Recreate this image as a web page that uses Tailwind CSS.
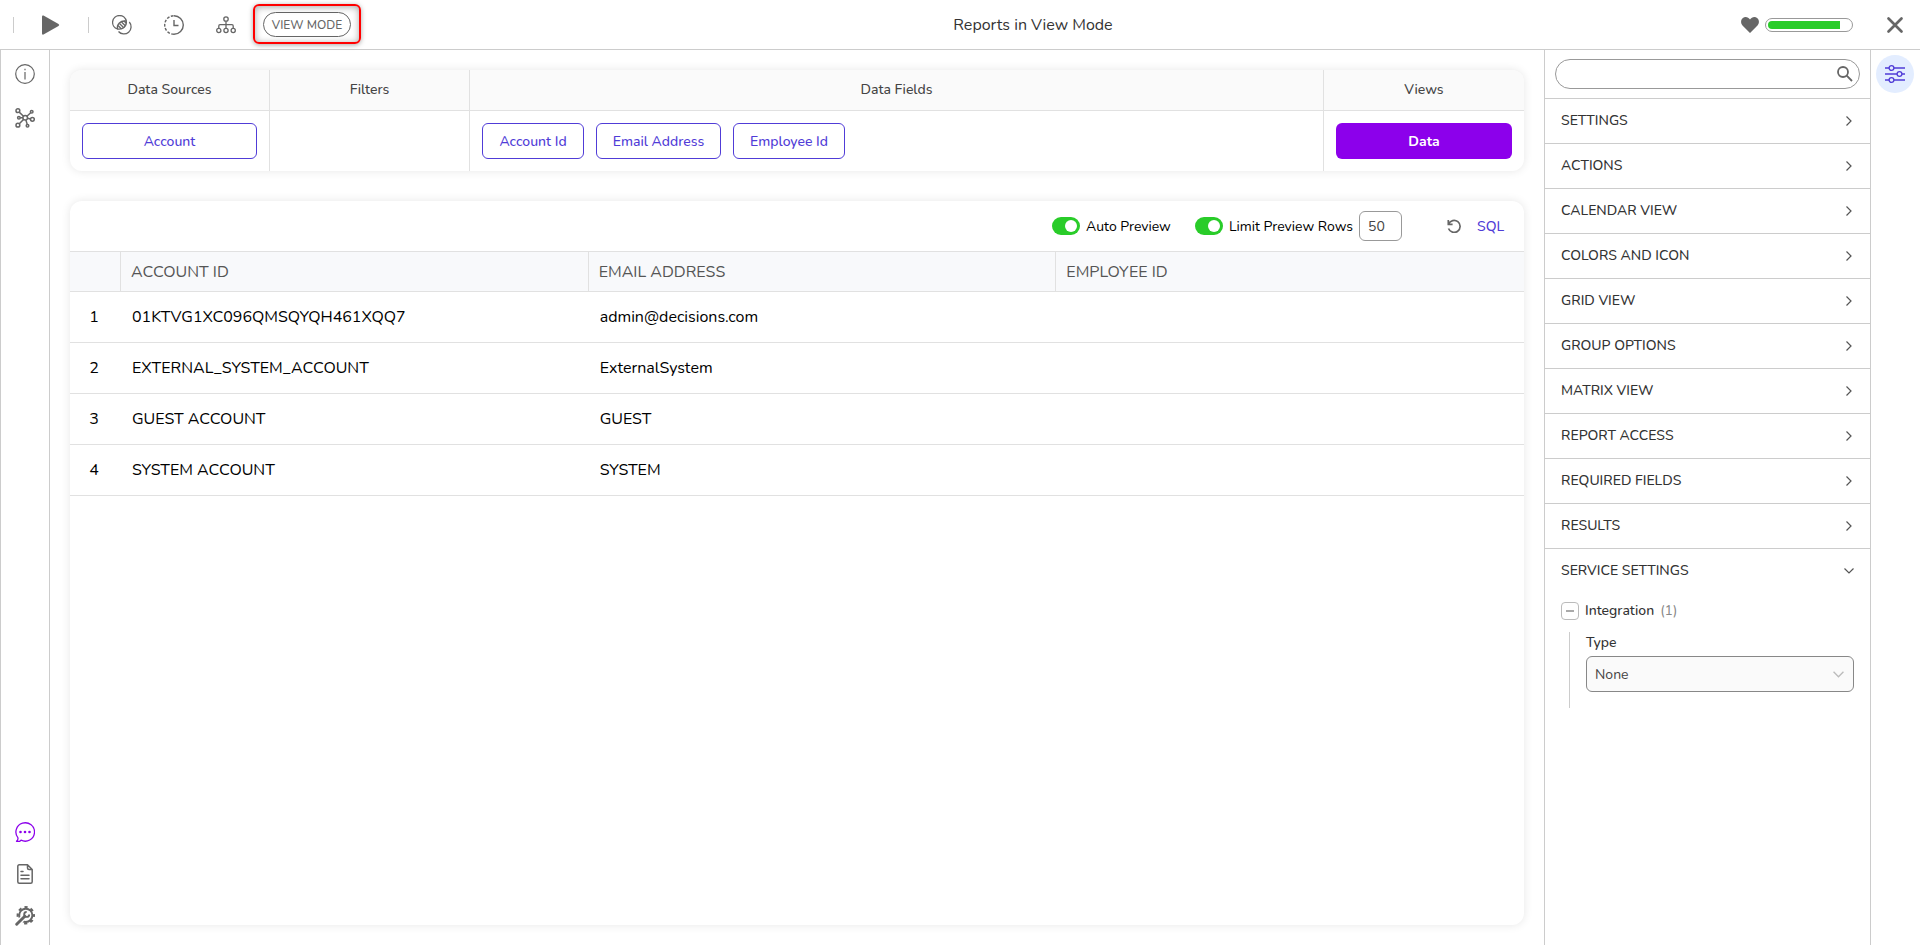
<!DOCTYPE html>
<html lang="en">
<head>
    <meta charset="UTF-8">
    <meta name="viewport" content="width=device-width, initial-scale=1.0">
    <title>Reports in View Mode</title>
    <script src="https://cdn.jsdelivr.net/npm/@tailwindcss/browser@4"></script>
</head>
<body class="h-screen flex flex-col overflow-hidden bg-white text-sm text-[#333] font-['Nunito','Open_Sans',sans-serif]">
    <!-- Top bar -->
    <header class="h-[50px] shrink-0 flex items-center border-b border-[#ccc] text-[#666]">
        <div class="flex items-center pl-[13px]">
            <span class="w-px h-4 bg-[#ccc]"></span>
            <button class="ml-7 w-[18px] h-5" aria-label="Run">
                <svg class="w-[18px] h-5" viewBox="0 0 18 20" fill="currentColor"><path d="M0 1.500Q0 0 1.500.500L16.500 9Q18 10 16.500 11L1.500 19.500Q0 20 0 18.500Z"/></svg>
            </button>
            <span class="ml-7 w-px h-4 bg-[#ccc]"></span>
            <button class="ml-[23px] size-5" aria-label="Compare">
                <svg class="size-5" viewBox="0 0 20 20" fill="none" stroke="currentColor" stroke-width="1.300">
                    <path d="M5.500 14A6.900 6.900 0 1 1 14.300 6.200"/>
                    <path d="M17.300 7A7 7 0 1 1 6.500 16.500"/>
                    <path d="M5.500 14C4.500 9.500 8.500 5 14.300 6.200C15 11 11 15 5.500 14Z"/>
                    <path d="M6 10.500L9.500 14M7.500 8.500L12 13M9.500 7L13.300 10.700M12 6L14.300 8.300"/>
                </svg>
            </button>
            <button class="ml-8 size-5" aria-label="History">
                <svg class="size-5" viewBox="0 0 20 20" fill="none" stroke="currentColor" stroke-width="1.400">
                    <path d="M10 .700A9.300 9.300 0 0 1 10 19.300"/>
                    <path d="M10 19.300A9.300 9.300 0 0 1 10 .700" stroke-dasharray="2.800 1.500"/>
                    <path d="M10 5V10.500H14.500"/>
                </svg>
            </button>
            <button class="ml-8 size-5" aria-label="Dependencies">
                <svg class="size-5" viewBox="0 0 20 20" fill="none" stroke="currentColor" stroke-width="1.300">
                    <circle cx="10" cy="4" r="2.200"/><circle cx="2.800" cy="15.500" r="2.100"/><circle cx="10" cy="15.500" r="2.100"/><circle cx="17.200" cy="15.500" r="2.100"/>
                    <path d="M10 6.200V13.400M2.800 13.400V11Q2.800 9.700 4 9.700H16Q17.200 9.700 17.200 11V13.400"/>
                </svg>
            </button>
            <div class="relative ml-[27px]">
                <span class="flex items-center justify-center w-[88px] h-[25px] border border-[#666] rounded-full text-xs font-medium">VIEW MODE</span>
                <span class="absolute -inset-x-[10px] -top-2 -bottom-[7px] border-2 border-[#f00] rounded-md shadow-[0_1px_5px_rgba(0,0,0,0.35),inset_0_1px_7px_rgba(0,0,0,0.35)]"></span>
            </div>
        </div>
        <h1 class="flex-1 text-center text-base text-[#333]">Reports in View Mode</h1>
        <div class="flex items-center pl-[26px] pr-4">
            <svg class="w-[18px] h-4" viewBox="0 0 18 16" fill="currentColor"><path d="M9 16L1.500 8.500C-.500 6.300-.300 3 1.600 1.300C3.800-.700 7.200-.300 9 2.600C10.800-.300 14.200-.700 16.400 1.300C18.300 3 18.500 6.300 16.500 8.500Z"/></svg>
            <div class="ml-[6px] w-[88px] h-[14px] border border-[#999] rounded-full p-[2px]">
                <div class="h-full bg-[#29cc29] rounded-l-full" style="width: 88%"></div>
            </div>
            <button class="ml-[33px] size-[18px]" aria-label="Close">
                <svg class="size-[18px]" viewBox="0 0 18 18" fill="none" stroke="currentColor" stroke-width="2.700" stroke-linecap="round"><path d="M2.500 2.500L15.500 15.500M15.500 2.500L2.500 15.500"/></svg>
            </button>
        </div>
    </header>

    <div class="flex-1 min-h-0 flex">
        <!-- Left rail -->
        <nav class="w-[50px] shrink-0 border-x border-[#ccc] flex flex-col items-center pt-[14px] pb-[19px] text-[#666]">
            <button class="size-5" aria-label="Info">
                <svg class="size-5" viewBox="0 0 20 20" fill="none" stroke="currentColor" stroke-width="1.200"><circle cx="10" cy="10" r="9.300"/><path d="M10 8V15.500M10 4.700V6.200"/></svg>
            </button>
            <button class="mt-6 size-5" aria-label="Relations">
                <svg class="size-5" viewBox="0 0 20 20" fill="none" stroke="currentColor" stroke-width="1.500">
                    <circle cx="2.900" cy="2.700" r="1.900"/><circle cx="16.700" cy="3.700" r="1.300"/><circle cx="3.900" cy="9.800" r="1.300"/><circle cx="17.400" cy="11.300" r="1.900"/><circle cx="2.900" cy="17.200" r="1.900"/><circle cx="12.500" cy="17.700" r="1.300"/><circle cx="10.200" cy="9.800" r="2.300"/>
                    <path d="M4.200 4.100L8.500 8.200M15.700 4.700L11.900 8.200M5.200 9.800H7.900M12.500 10.200L15.500 10.900M8.500 11.400L4.300 15.800M10.900 12L12.200 16.400"/>
                </svg>
            </button>
            <button class="mt-auto size-5 text-[#8c00eb]" aria-label="Chat">
                <svg class="size-5" viewBox="0 0 20 20" fill="none" stroke="currentColor" stroke-width="1.300" stroke-linejoin="round">
                    <path d="M3 15.800A9.300 9.200 0 1 1 6 18.200L4.800 19.300H1.500Q3.200 17.800 3 15.800"/>
                    <g fill="currentColor" stroke="none"><circle cx="5.500" cy="10" r="1.300"/><circle cx="10" cy="10" r="1.300"/><circle cx="14.500" cy="10" r="1.300"/></g>
                </svg>
            </button>
            <button class="mt-[22px] size-5" aria-label="Document">
                <svg class="size-5" viewBox="0 0 20 20" fill="none" stroke="currentColor" stroke-width="1.500" stroke-linejoin="round" stroke-linecap="round">
                    <path d="M12.500.800H4.300Q2.800.800 2.800 2.300V17.700Q2.800 19.200 4.300 19.200H15.700Q17.200 19.200 17.200 17.700V5.500L12.500.800V4Q12.500 5.500 14 5.500H17.200M6 7.500H8M6 11.300H14M6 14.800H14"/>
                </svg>
            </button>
            <button class="mt-[22px] size-5" aria-label="Settings">
                <svg class="size-5" viewBox="0 0 20 20" fill="none" stroke="currentColor">
                    <circle cx="10.800" cy="9.300" r="6.600" stroke-width="2"/>
                    <circle cx="10.800" cy="9.300" r="8.100" stroke-width="2.200" stroke-dasharray="3.200 3.160" stroke-dashoffset="1.600"/>
                    <path d="M0 20L9 11" stroke="#fff" stroke-width="5.500"/>
                    <path d="M1.700 18.300L9.800 10.200" stroke-width="2.900" stroke-linecap="round"/>
                    <path d="M11.700 5.900A2.500 2.500 0 1 0 14.200 8.400" stroke-width="1.900"/>
                </svg>
            </button>
        </nav>

        <main class="flex-1 min-w-0 flex flex-col gap-[30px] p-5">
            <!-- Report definition -->
            <section class="shrink-0 grid grid-cols-[200px_200px_1fr_200px] rounded-xl overflow-hidden shadow-[0_0_10px_rgba(0,0,0,0.1)] text-[#444]">
                <div class="border-r border-[#e1e1e1]">
                    <h2 class="h-[41px] flex items-center justify-center bg-[#fafafa] border-b border-[#e1e1e1] font-medium">Data Sources</h2>
                    <div class="flex p-3 h-[60px]">
                        <button class="w-full h-9 pt-0.5 border border-[#503cd7] rounded-md text-[#503cd7] font-medium">Account</button>
                    </div>
                </div>
                <div class="border-r border-[#e1e1e1]">
                    <h2 class="h-[41px] flex items-center justify-center bg-[#fafafa] border-b border-[#e1e1e1] font-medium">Filters</h2>
                </div>
                <div class="border-r border-[#e1e1e1]">
                    <h2 class="h-[41px] flex items-center justify-center bg-[#fafafa] border-b border-[#e1e1e1] font-medium">Data Fields</h2>
                    <div class="flex gap-3 p-3 h-[60px]">
                        <button class="w-[102px] h-9 pt-0.5 border border-[#503cd7] rounded-md text-[#503cd7] font-medium">Account Id</button>
                        <button class="w-[125px] h-9 pt-0.5 border border-[#503cd7] rounded-md text-[#503cd7] font-medium">Email Address</button>
                        <button class="w-[112px] h-9 pt-0.5 border border-[#503cd7] rounded-md text-[#503cd7] font-medium">Employee Id</button>
                    </div>
                </div>
                <div>
                    <h2 class="h-[41px] flex items-center justify-center bg-[#fafafa] border-b border-[#e1e1e1] font-medium">Views</h2>
                    <div class="flex p-3 h-[60px]">
                        <button class="w-full h-9 pt-0.5 rounded-md bg-[#8c00eb] text-white font-bold">Data</button>
                    </div>
                </div>
            </section>

            <!-- Preview -->
            <section class="flex-1 min-h-0 rounded-xl overflow-hidden shadow-[0_0_10px_rgba(0,0,0,0.1)]">
                <div class="h-[51px] flex items-center justify-end pr-5 border-b border-[#e1e1e1] text-black">
                    <label class="flex items-center gap-[6px]">
                        <input type="checkbox" checked class="sr-only">
                        <span class="w-7 h-[18px] rounded-full bg-[#29cc29] p-[3px] flex justify-end"><span class="size-3 rounded-full bg-white"></span></span>
                        <span class="w-[84px] pt-0.5 whitespace-nowrap">Auto Preview</span>
                    </label>
                    <label class="ml-[25px] flex items-center gap-[6px]">
                        <input type="checkbox" checked class="sr-only">
                        <span class="w-7 h-[18px] rounded-full bg-[#29cc29] p-[3px] flex justify-end"><span class="size-3 rounded-full bg-white"></span></span>
                        <span class="w-[124px] pt-0.5 whitespace-nowrap">Limit Preview Rows</span>
                    </label>
                    <input type="text" value="50" aria-label="Preview rows" class="ml-[6px] w-[43px] h-[30px] px-2 border border-[#999] rounded-md text-[#444]">
                    <button class="ml-[45px] size-[14px] text-[#666]" aria-label="Refresh">
                        <svg class="size-[14px]" viewBox="0 0 14 14" fill="none" stroke="currentColor" stroke-width="1.700"><path d="M1.300 1V5.300H5.600M1.600 5A6 6 0 1 1 1.500 9.500"/></svg>
                    </button>
                    <a href="#" class="ml-4 w-[27px] pt-0.5 text-[#503cd7] font-medium">SQL</a>
                </div>
                <table class="w-full table-fixed border-separate border-spacing-0 text-base text-black">
                    <thead>
                        <tr class="h-10 bg-[#f8f9fb] text-[#555] text-left">
                            <th class="w-[51px] p-0 border-r border-b border-[#e1e1e1]"></th>
                            <th class="px-[10px] py-0 font-normal border-r border-b border-[#e1e1e1]">ACCOUNT ID</th>
                            <th class="px-[10px] py-0 font-normal border-r border-b border-[#e1e1e1]">EMAIL ADDRESS</th>
                            <th class="px-[10px] py-0 font-normal border-b border-[#e1e1e1]">EMPLOYEE ID</th>
                        </tr>
                    </thead>
                    <tbody>
                        <tr class="h-[51px]">
                            <td class="pr-[3px] text-center border-b border-[#e1e1e1]">1</td>
                            <td class="px-[11px] border-b border-[#e1e1e1]">01KTVG1XC096QMSQYQH461XQQ7</td>
                            <td class="px-[11px] border-b border-[#e1e1e1]">admin@decisions.com</td>
                            <td class="border-b border-[#e1e1e1]"></td>
                        </tr>
                        <tr class="h-[51px]">
                            <td class="pr-[3px] text-center border-b border-[#e1e1e1]">2</td>
                            <td class="px-[11px] border-b border-[#e1e1e1]">EXTERNAL_SYSTEM_ACCOUNT</td>
                            <td class="px-[11px] border-b border-[#e1e1e1]">ExternalSystem</td>
                            <td class="border-b border-[#e1e1e1]"></td>
                        </tr>
                        <tr class="h-[51px]">
                            <td class="pr-[3px] text-center border-b border-[#e1e1e1]">3</td>
                            <td class="px-[11px] border-b border-[#e1e1e1]">GUEST ACCOUNT</td>
                            <td class="px-[11px] border-b border-[#e1e1e1]">GUEST</td>
                            <td class="border-b border-[#e1e1e1]"></td>
                        </tr>
                        <tr class="h-[51px]">
                            <td class="pr-[3px] text-center border-b border-[#e1e1e1]">4</td>
                            <td class="px-[11px] border-b border-[#e1e1e1]">SYSTEM ACCOUNT</td>
                            <td class="px-[11px] border-b border-[#e1e1e1]">SYSTEM</td>
                            <td class="border-b border-[#e1e1e1]"></td>
                        </tr>
                    </tbody>
                </table>
            </section>
        </main>

        <!-- Properties panel -->
        <aside class="w-[327px] shrink-0 border-x border-[#ccc]">
            <div class="h-12 px-[10px] pt-[9px]">
                <div class="flex items-center h-[30px] pl-3 pr-[6px] border border-[#999] rounded-full">
                    <input type="text" aria-label="Search properties" class="flex-1 min-w-0 outline-none">
                    <svg class="size-4 text-[#666]" viewBox="0 0 16 16" fill="none" stroke="currentColor" stroke-width="1.800"><circle cx="6" cy="6" r="5"/><path d="M9.700 9.700L15 15"/></svg>
                </div>
            </div>
            <button class="w-full h-[45px] flex items-center justify-between pl-4 pr-[18px] border-t border-[#ccc] font-medium">SETTINGS
                <svg class="w-[6px] h-[10px]" viewBox="0 0 6 10" fill="none" stroke="#555" stroke-width="1.200"><path d="M.500.500L5 5L.500 9.500"/></svg>
            </button>
            <button class="w-full h-[45px] flex items-center justify-between pl-4 pr-[18px] border-t border-[#ccc] font-medium">ACTIONS
                <svg class="w-[6px] h-[10px]" viewBox="0 0 6 10" fill="none" stroke="#555" stroke-width="1.200"><path d="M.500.500L5 5L.500 9.500"/></svg>
            </button>
            <button class="w-full h-[45px] flex items-center justify-between pl-4 pr-[18px] border-t border-[#ccc] font-medium">CALENDAR VIEW
                <svg class="w-[6px] h-[10px]" viewBox="0 0 6 10" fill="none" stroke="#555" stroke-width="1.200"><path d="M.500.500L5 5L.500 9.500"/></svg>
            </button>
            <button class="w-full h-[45px] flex items-center justify-between pl-4 pr-[18px] border-t border-[#ccc] font-medium">COLORS AND ICON
                <svg class="w-[6px] h-[10px]" viewBox="0 0 6 10" fill="none" stroke="#555" stroke-width="1.200"><path d="M.500.500L5 5L.500 9.500"/></svg>
            </button>
            <button class="w-full h-[45px] flex items-center justify-between pl-4 pr-[18px] border-t border-[#ccc] font-medium">GRID VIEW
                <svg class="w-[6px] h-[10px]" viewBox="0 0 6 10" fill="none" stroke="#555" stroke-width="1.200"><path d="M.500.500L5 5L.500 9.500"/></svg>
            </button>
            <button class="w-full h-[45px] flex items-center justify-between pl-4 pr-[18px] border-t border-[#ccc] font-medium">GROUP OPTIONS
                <svg class="w-[6px] h-[10px]" viewBox="0 0 6 10" fill="none" stroke="#555" stroke-width="1.200"><path d="M.500.500L5 5L.500 9.500"/></svg>
            </button>
            <button class="w-full h-[45px] flex items-center justify-between pl-4 pr-[18px] border-t border-[#ccc] font-medium">MATRIX VIEW
                <svg class="w-[6px] h-[10px]" viewBox="0 0 6 10" fill="none" stroke="#555" stroke-width="1.200"><path d="M.500.500L5 5L.500 9.500"/></svg>
            </button>
            <button class="w-full h-[45px] flex items-center justify-between pl-4 pr-[18px] border-t border-[#ccc] font-medium">REPORT ACCESS
                <svg class="w-[6px] h-[10px]" viewBox="0 0 6 10" fill="none" stroke="#555" stroke-width="1.200"><path d="M.500.500L5 5L.500 9.500"/></svg>
            </button>
            <button class="w-full h-[45px] flex items-center justify-between pl-4 pr-[18px] border-t border-[#ccc] font-medium">REQUIRED FIELDS
                <svg class="w-[6px] h-[10px]" viewBox="0 0 6 10" fill="none" stroke="#555" stroke-width="1.200"><path d="M.500.500L5 5L.500 9.500"/></svg>
            </button>
            <button class="w-full h-[45px] flex items-center justify-between pl-4 pr-[18px] border-t border-[#ccc] font-medium">RESULTS
                <svg class="w-[6px] h-[10px]" viewBox="0 0 6 10" fill="none" stroke="#555" stroke-width="1.200"><path d="M.500.500L5 5L.500 9.500"/></svg>
            </button>
            <button class="w-full h-[45px] flex items-center justify-between pl-4 pr-4 border-t border-[#ccc] font-medium">SERVICE SETTINGS
                <svg class="w-[10px] h-[6px]" viewBox="0 0 10 6" fill="none" stroke="#555" stroke-width="1.200"><path d="M.500.500L5 5L9.500.500"/></svg>
            </button>
            <div class="pl-4 pr-4 pt-[9px]">
                <div class="flex items-center h-[18px]">
                    <button class="size-[18px] flex items-center justify-center border border-[#bbb] rounded-sm" aria-label="Collapse Integration"><span class="w-2 h-0.5 bg-[#aaa]"></span></button>
                    <span class="ml-[6px] font-medium">Integration</span>
                    <span class="ml-[6px] text-[#888]">(1)</span>
                </div>
                <div class="mt-3 ml-2 pl-4 h-[76px] border-l border-[#ccc]">
                    <label for="type" class="block h-6 leading-[22px] font-medium">Type</label>
                    <div class="grid items-center">
                        <select id="type" class="col-start-1 row-start-1 appearance-none w-full h-9 pt-0.5 px-2 border border-[#888] rounded-md bg-[#fafafa] text-[#444]">
                            <option>None</option>
                        </select>
                        <svg class="col-start-1 row-start-1 justify-self-end mr-[10px] w-[11px] h-[7px] pointer-events-none" viewBox="0 0 10 6" fill="none" stroke="#bbb" stroke-width="1.200"><path d="M.500.500L5 5L9.500.500"/></svg>
                    </div>
                </div>
            </div>
        </aside>

        <!-- Right rail -->
        <nav class="w-[49px] shrink-0 flex flex-col items-start pt-[5px] pl-[5px]">
            <button class="size-[38px] flex items-center justify-center rounded-full bg-[#e3edff]" aria-label="Properties">
                <svg class="size-5" viewBox="0 0 20 20" fill="none" stroke="#503cd7" stroke-width="1.300">
                    <path d="M0 4H4M9 4H20M0 10H12M17 10H20M0 16H4M9 16H20"/>
                    <circle cx="6.500" cy="4" r="2.400"/><circle cx="14.500" cy="10" r="2.400"/><circle cx="6.500" cy="16" r="2.400"/>
                </svg>
            </button>
        </nav>
    </div>
</body>
</html>
